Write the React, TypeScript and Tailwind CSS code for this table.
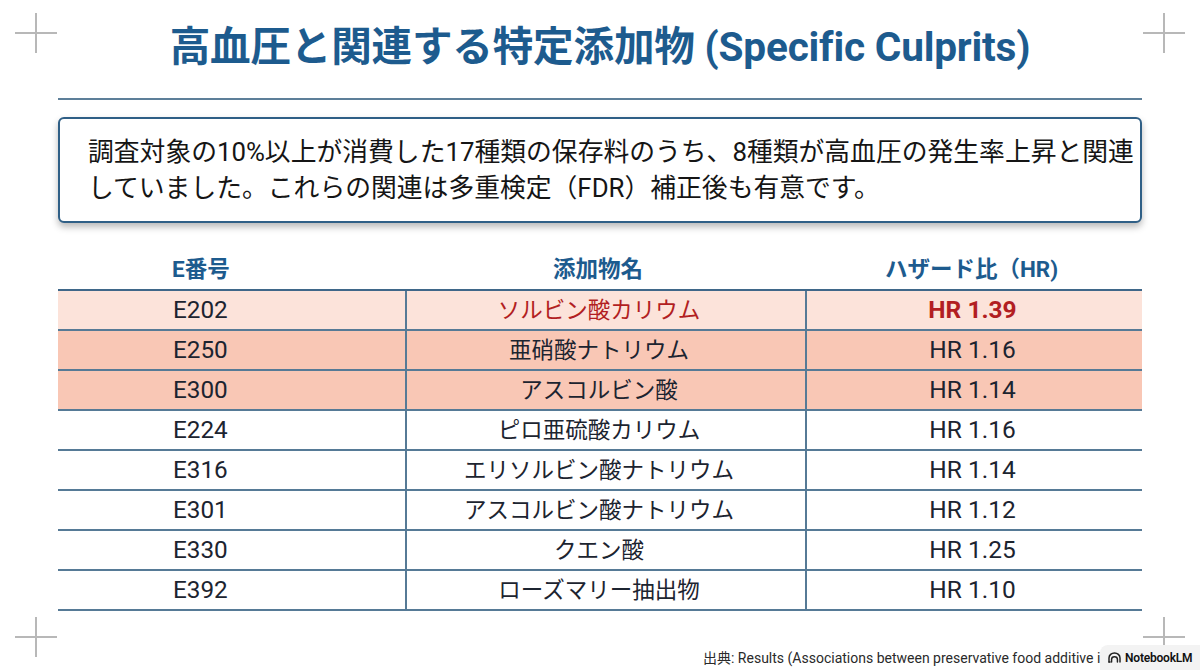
import React from "react";

type Row = { code: string; name: string; hr: string; tone?: "top" | "mid" };

const rows: Row[] = [
  { code: "E202", name: "ソルビン酸カリウム", hr: "HR 1.39", tone: "top" },
  { code: "E250", name: "亜硝酸ナトリウム", hr: "HR 1.16", tone: "mid" },
  { code: "E300", name: "アスコルビン酸", hr: "HR 1.14", tone: "mid" },
  { code: "E224", name: "ピロ亜硫酸カリウム", hr: "HR 1.16" },
  { code: "E316", name: "エリソルビン酸ナトリウム", hr: "HR 1.14" },
  { code: "E301", name: "アスコルビン酸ナトリウム", hr: "HR 1.12" },
  { code: "E330", name: "クエン酸", hr: "HR 1.25" },
  { code: "E392", name: "ローズマリー抽出物", hr: "HR 1.10" },
];

function Cross({ className }: { className: string }) {
  return (
    <div className={`absolute w-[42px] h-[40px] ${className}`}>
      <div className="absolute left-0 right-0 top-[19px] h-[1.5px] bg-[#b8b8b8]" />
      <div className="absolute top-0 bottom-0 left-[20px] w-[1.5px] bg-[#b8b8b8]" />
    </div>
  );
}

function NotebookIcon() {
  return (
    <svg width="13" height="11" viewBox="0 0 14 12" fill="none" stroke="#222" strokeWidth="1.6" strokeLinecap="round">
      <path d="M1 11V6.5a6 5.5 0 0 1 12 0V11" />
      <path d="M3.8 11V8.2a3.2 3 0 0 1 6.4 0V11" />
      <path d="M1 11h1.2" />
    </svg>
  );
}

export default function App() {
  return (
    <div className="relative w-[1200px] h-[670px] overflow-hidden bg-white font-['Roboto','Noto_Sans_CJK_JP',sans-serif] text-[#1c2430]">
      <Cross className="left-[15px] top-[13px]" />
      <Cross className="left-[1143px] top-[13px]" />
      <Cross className="left-[15px] top-[617px]" />
      <Cross className="left-[1143px] top-[617px]" />

      <div className="flex flex-col px-[58px]">
        <h1 className="mt-[24px] h-[46px] text-center text-[40.6px] leading-[46px] font-bold text-[#1d5b8e] tracking-[-0.2px]">
          高血圧と関連する特定添加物 (Specific Culprits)
        </h1>

        <div className="mt-[28px] h-[2px] bg-[#5d7f99]" />

        <div className="mt-[17px] h-[106px] rounded-[6px] border-2 border-[#2f5f86] bg-white pl-[28px] pt-[15px] shadow-[0_4px_7px_rgba(0,0,0,0.28)]">
          <p className="text-[25.8px] leading-[36px] text-[#151515] whitespace-nowrap">
            調査対象の10%以上が消費した17種類の保存料のうち、8種類が高血圧の発生率上昇と関連
            <br />
            していました。これらの関連は多重検定（FDR）補正後も有意です。
          </p>
        </div>

        <div className="mt-[27px] flex flex-col">
          <div className="grid h-[41px] grid-cols-[347px_400px_1fr] items-center border-b-2 border-[#3f6789] text-[22.5px] font-bold text-[#1d5b8e]">
            <div className="pl-[114px]">E番号</div>
            <div className="pr-[14px] text-center">添加物名</div>
            <div className="pr-[4px] text-center">ハザード比（HR)</div>
          </div>
          {rows.map((r) => {
            const bg =
              r.tone === "top" ? "bg-[#fce3da]" : r.tone === "mid" ? "bg-[#f9c7b5]" : "bg-white";
            const red = r.tone === "top";
            return (
              <div
                key={r.code}
                className={`grid h-[40px] grid-cols-[347px_400px_1fr] items-center border-b-2 border-[#567a96] ${bg}`}
              >
                <div className="pl-[115px] text-[24.3px] leading-[38px]">{r.code}</div>
                <div
                  className={`h-full border-l-2 border-[#567a96] pr-[14px] text-center text-[22.5px] leading-[38px] ${red ? "text-[#b21e22]" : ""}`}
                >
                  {r.name}
                </div>
                <div
                  className={`h-full border-l-2 border-[#567a96] pr-[4px] text-center text-[24.5px] leading-[38px] ${red ? "font-bold text-[#b21e22]" : ""}`}
                >
                  {r.hr}
                </div>
              </div>
            );
          })}
        </div>

        <div className="mt-[37px] w-[1042px] overflow-hidden whitespace-nowrap pl-[645px] text-[14px] leading-[20px] text-[#2a2a2a]">
          出典: Results (Associations between preservative food additive intake and hypertension)
        </div>
      </div>

      <div className="absolute right-0 bottom-0 flex h-[25px] w-[100px] items-center gap-[4px] rounded-tl-[8px] bg-[#f3f3f3] pl-[8px] text-[12px] font-semibold tracking-[-0.2px] text-[#111]">
        <NotebookIcon />
        <span>NotebookLM</span>
      </div>
    </div>
  );
}
